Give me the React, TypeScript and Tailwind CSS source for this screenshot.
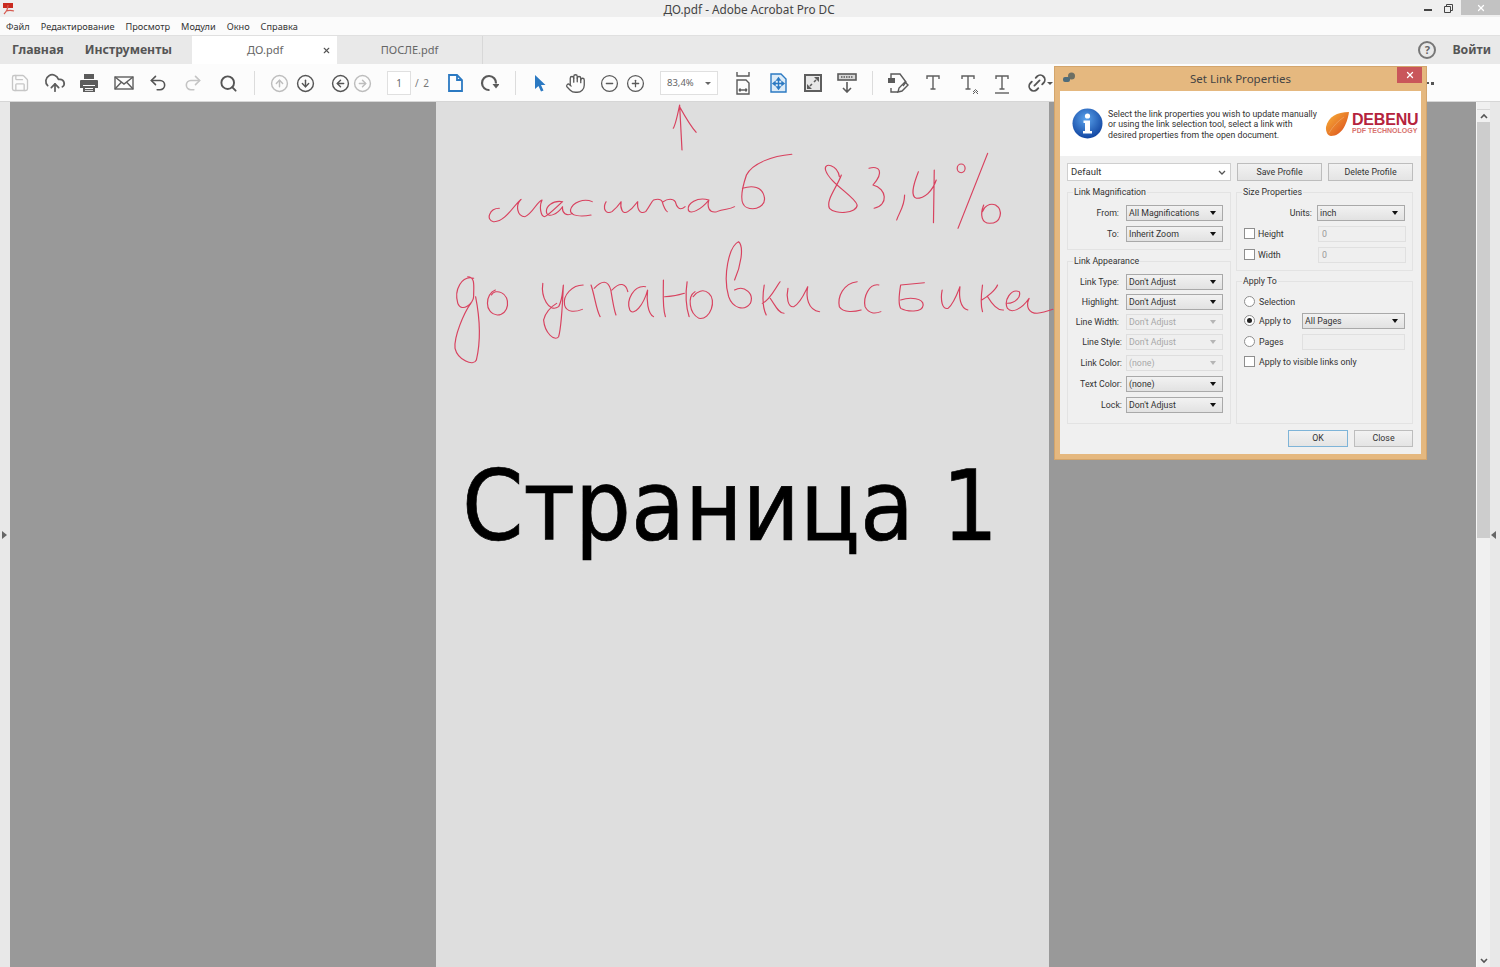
import React from 'react';
import {
  Save, CloudUpload, Undo2, Redo2, Search, CircleArrowUp, CircleArrowDown, CircleArrowLeft, CircleArrowRight,
  Hand, CircleMinus, CirclePlus, Link2, X,
} from 'lucide-react';

const UI = 'font-["Noto_Sans","Liberation_Sans",sans-serif]';
const DLG = 'font-["Roboto","Liberation_Sans",sans-serif]';

// toolbar slot, 24px wide, centres the icon
const Slot = ({ className = '', children }: { className?: string; children: React.ReactNode }) => (
  <div className={`w-6 h-6 flex items-center justify-center shrink-0 ${className}`}>{children}</div>
);

const Sep = ({ className = '' }: { className?: string }) => <div className={`w-px h-6 bg-[#dcdcdc] shrink-0 ${className}`} />;

const SerifT = ({ under, wave }: { under?: boolean; wave?: boolean }) => (
  <svg width="24" height="24" viewBox="0 0 24 24" fill="none" stroke="#5f5f5f" strokeWidth="1.4">
    <path d="M6 8V5h12v3M12 5v13M9.5 18h5" />
    {under && <path d="M5 22h14" />}
    {wave && <path d="M17 21l2.500-2.500L22 21M17 23l2.500-2.500L22 23" strokeWidth="1" />}
  </svg>
);

const Toolbar = () => (
  <div className="h-[38px] flex items-center pl-2 pt-px bg-[#fcfcfc] border-b border-[#d6d6d6] relative">
    <Slot><Save size={20} color="#c6c6c6" strokeWidth={1.6} /></Slot>
    <Slot className="ml-[11px]"><CloudUpload size={22} color="#5e5e5e" strokeWidth={1.9} /></Slot>
    <Slot className="ml-[10px]">
      <svg width="20" height="20" viewBox="0 0 20 20" fill="#5c5c5c">
        <path d="M5 1h10v5H5z" />
        <path fillRule="evenodd" d="M2 7h16a1 1 0 011 1v7h-3v-3H4v3H1V8a1 1 0 011-1z" />
        <path fillRule="evenodd" d="M4 13h12v6H4zM6 15v1h8v-1zM6 17v.8h8V17z" />
      </svg>
    </Slot>
    <Slot className="ml-[11px]">
      <svg width="20" height="16" viewBox="0 0 20 16" fill="none" stroke="#5e5e5e" strokeWidth="1.4">
        <rect x="1" y="2" width="18" height="12" />
        <path d="M1 2l9 7 9-7M1 14l6.500-7M19 14l-6.500-7" />
      </svg>
    </Slot>
    <Slot className="ml-[10px]"><Undo2 size={20} color="#555" strokeWidth={1.9} /></Slot>
    <Slot className="ml-[11px]"><Redo2 size={20} color="#c4c4c4" strokeWidth={1.9} /></Slot>
    <Slot className="ml-[11px]"><Search size={19} color="#555" strokeWidth={2.4} /></Slot>
    <Sep className="ml-[14px]" />
    <Slot className="ml-[12px]"><CircleArrowUp size={19} color="#bdbdbd" strokeWidth={1.8} /></Slot>
    <Slot className="ml-[2px]"><CircleArrowDown size={19} color="#555" strokeWidth={1.8} /></Slot>
    <Slot className="ml-[11px]"><CircleArrowLeft size={19} color="#555" strokeWidth={1.8} /></Slot>
    <Slot className="ml-[-2px]"><CircleArrowRight size={19} color="#bdbdbd" strokeWidth={1.8} /></Slot>
    <div className="ml-[13px] w-[24px] h-[24px] shrink-0 border border-[#e0e0e0] bg-white flex items-center justify-center text-[10px] text-[#666]">1</div>
    <div className="ml-[4px] w-[15px] shrink-0 text-[10px] text-[#777] whitespace-pre tracking-[1px]">/ 2</div>
    <Slot className="ml-[13px]">
      <svg width="16" height="18" viewBox="0 0 16 18" fill="none" stroke="#2b79c2" strokeWidth="1.8">
        <path d="M2 1h8l5 5v11H2zM10 1v5h5" />
      </svg>
    </Slot>
    <Slot className="ml-[10px]">
      <svg width="20" height="20" viewBox="0 0 20 20" fill="none" stroke="#5a5a5a" strokeWidth="2.2">
        <path d="M10.500 17A7 7 0 1117 10.500" />
        <path d="M13.500 11h7L17 15.500z" fill="#5a5a5a" stroke="none" />
      </svg>
    </Slot>
    <Sep className="ml-[14px]" />
    <Slot className="ml-[12px]">
      <svg width="14" height="18" viewBox="0 0 14 18" fill="#2b79c2"><path d="M2 1l10.500 10H8l2.500 5.500-2.500 1L5.500 12 2 15z" /></svg>
    </Slot>
    <Slot className="ml-[11px]"><Hand size={21} color="#5a5a5a" strokeWidth={1.5} /></Slot>
    <Slot className="ml-[10px]"><CircleMinus size={19} color="#5a5a5a" strokeWidth={1.6} /></Slot>
    <Slot className="ml-[2px]"><CirclePlus size={19} color="#5a5a5a" strokeWidth={1.6} /></Slot>
    <div className="ml-[13px] w-[58px] h-[24px] shrink-0 border border-[#e0e0e0] bg-white flex items-center pl-[6px] text-[9.500px] text-[#666]">
      83,4%
      <span className="ml-auto mr-[6px] w-0 h-0 border-x-[3px] border-x-transparent border-t-[3px] border-t-[#666]" />
    </div>
    <Slot className="ml-[13px]">
      <svg width="18" height="24" viewBox="0 0 18 24" fill="none" stroke="#5a5a5a" strokeWidth="1.4">
        <path d="M3 1v4h12V1M3 9h9l3 3v11H3zM5 19h8M5 19l1.500-1.500M5 19l1.500 1.500M13 19l-1.500-1.500M13 19l-1.500 1.500" />
      </svg>
    </Slot>
    <Slot className="ml-[11px]">
      <svg width="17" height="20" viewBox="0 0 17 20" fill="none" stroke="#2b79c2" strokeWidth="1.4">
        <path d="M1 1h10l5 5v13H1z" fill="#dcebf7" />
        <path d="M8.500 6v9M4 10.500h9M8.500 5L7 7h3zM8.500 16L7 14h3zM3 10.500L5 9v3zM14 10.500L12 9v3z" />
      </svg>
    </Slot>
    <Slot className="ml-[11px]">
      <svg width="18" height="18" viewBox="0 0 18 18">
        <rect width="18" height="18" fill="#5e5e5e" />
        <rect x="2" y="2" width="14" height="14" fill="#e8e8e8" />
        <path d="M10 3h5v5zM3 10v5h5z" fill="#5e5e5e" />
        <path d="M12 6l-2 2M6 12l2-2" stroke="#5e5e5e" strokeWidth="1.6" />
      </svg>
    </Slot>
    <Slot className="ml-[10px]">
      <svg width="20" height="20" viewBox="0 0 20 20" fill="none" stroke="#5a5a5a" strokeWidth="1.6">
        <rect x="1" y="1" width="18" height="6" fill="#d8d8d8" />
        <path d="M4 4h12" strokeDasharray="1.5 1" />
        <path d="M10 9v10M6 15l4 4 4-4" />
      </svg>
    </Slot>
    <Sep className="ml-[13px]" />
    <Slot className="ml-[13px]">
      <svg width="22" height="22" viewBox="0 0 22 22" fill="none" stroke="#5a5a5a" strokeWidth="1.4">
        <path d="M4 8V2h9l6 8-3 4M4 16v4h7" />
        <rect x="1" y="6" width="7" height="5" fill="#5a5a5a" stroke="none" />
        <path d="M11 20l1-4 6-6 3 3-6 6z" />
      </svg>
    </Slot>
    <Slot className="ml-[11px]"><SerifT /></Slot>
    <Slot className="ml-[11px]"><SerifT wave /></Slot>
    <Slot className="ml-[10px]"><SerifT under /></Slot>
    <Slot className="ml-[11px]"><Link2 size={22} color="#555" strokeWidth={2} className="-rotate-45" /></Slot>
    <span className="w-0 h-0 border-x-[3px] border-x-transparent border-t-[3px] border-t-[#555] -ml-[2px]" />
    <span className="ml-auto mr-[66px] flex gap-[2px]">
      <span className="w-[2px] h-[2px] bg-[#555]" />
      <span className="w-[3px] h-[3px] bg-[#555]" />
    </span>
  </div>
);

const Scribble = () => (
  <svg
    className="absolute left-[4px] top-[-2px] overflow-visible pointer-events-none"
    width="620"
    height="280"
    viewBox="0 0 1568 840"
    preserveAspectRatio="none"
    fill="none"
    stroke="#d8425f"
    strokeWidth="3"
    strokeLinecap="round"
    strokeLinejoin="round"
  >
    <path d="M612 150L606 15M606 15C600 50 595 75 590 85M606 20C620 50 635 80 648 97" />
    <path d="M150 325C125 325 115 360 135 365C165 368 190 310 205 298C190 315 195 350 215 350C235 340 245 305 258 300C250 320 255 350 265 350C275 345 300 315 310 305C285 300 265 320 270 340C275 352 295 345 310 320C308 340 320 350 335 340" />
    <path d="M385 305C365 295 335 305 330 330C328 350 360 350 382 345" />
    <path d="M420 305C410 325 420 345 435 335C445 325 455 310 458 305C455 325 462 345 475 335C490 325 495 310 500 305C498 325 505 345 520 335C530 320 535 305 540 300C555 295 560 300 562 305C565 320 572 335 575 335M565 305C575 295 590 295 595 305C598 320 605 335 620 320" />
    <path d="M680 300C650 290 625 310 628 330C632 345 660 330 680 300C675 320 680 340 700 335C720 325 730 330 745 320" />
    <path d="M890 163C840 168 790 190 775 225C765 260 755 310 775 322C800 335 825 315 820 290C815 260 790 255 765 265" />
    <path d="M1010 230C1005 195 970 185 975 210C985 250 1050 290 1055 315C1055 340 1000 345 985 325C975 300 1005 260 1015 225" />
    <path d="M1085 205C1110 195 1125 215 1095 255C1130 265 1135 315 1098 325" />
    <path d="M1175 285C1175 320 1160 340 1155 360" />
    <path d="M1210 215C1195 260 1190 290 1205 295C1225 295 1245 275 1255 240M1250 210L1248 368" />
    <path d="M1385 160L1310 385" />
    <ellipse cx="1318" cy="205" rx="10" ry="13" />
    <path d="M1375 315C1365 345 1370 370 1390 370C1420 370 1425 330 1405 315C1390 308 1375 320 1372 335" />

    <path d="M85 535C55 525 35 570 45 610C55 640 85 610 85 590C85 560 90 530 70 530" />
    <path d="M78 610C60 640 35 710 38 745C45 780 85 800 92 780C100 740 105 680 90 590" />
    <path d="M140 570C115 580 110 640 145 645C175 645 180 590 155 578C145 572 135 575 130 585" />
    <path d="M260 550C255 590 275 640 300 620C310 600 310 570 312 555C310 610 305 690 300 710C290 725 265 700 262 660C265 640 280 620 295 610" />
    <path d="M362 555C335 555 310 585 315 615C320 640 345 635 360 628" />
    <path d="M382 555C392 590 395 630 405 650M390 565C410 540 425 540 432 570C436 600 440 630 445 645M435 570C455 545 470 550 475 575" />
    <path d="M520 560C490 555 470 600 480 630C490 650 515 615 525 570C522 600 525 640 540 650" />
    <path d="M565 540C565 580 562 620 570 650M568 590C590 590 605 585 618 580M625 545C620 585 622 620 630 650" />
    <path d="M645 575C625 590 630 640 655 655C685 660 700 600 680 580C665 565 650 575 640 590" />
    <path d="M755 425C730 440 715 530 730 590C740 625 770 635 785 610C795 580 770 555 745 570M755 425C770 440 760 500 745 540" />
    <path d="M820 555C815 590 815 620 825 645M815 610C835 600 850 560 860 545M835 595C845 610 855 640 870 640" />
    <path d="M880 565C875 590 880 625 895 620C915 605 925 570 930 560C925 590 930 630 960 635" />
    <path d="M1055 545C1020 550 1005 590 1010 620C1020 640 1050 635 1065 630" />
    <path d="M1110 555C1085 550 1070 590 1075 620C1085 645 1105 640 1115 635" />
    <path d="M1165 555C1160 590 1160 615 1165 625C1180 635 1220 640 1222 615C1222 595 1190 590 1165 600M1165 555L1225 548" />
    <path d="M1270 570C1265 600 1270 630 1285 625C1300 610 1310 575 1315 560C1312 590 1315 625 1335 630" />
    <path d="M1372 555C1368 590 1368 620 1372 635M1370 600C1385 590 1405 570 1410 555M1385 590C1395 610 1410 632 1425 630" />
    <path d="M1435 610C1455 610 1470 590 1465 575C1445 565 1425 600 1435 625C1445 640 1470 630 1490 595C1480 620 1490 640 1510 640C1525 638 1540 632 1550 628" />
  </svg>
);

const Combo = ({ value, disabled, className = '' }: { value: string; disabled?: boolean; className?: string }) => (
  <div
    className={`h-4 flex items-center pl-[2px] pr-[6px] border text-[8.800px] ${
      disabled
        ? 'border-[#dedede] bg-[#efefef] text-[#a8a8a8]'
        : 'border-[#a9a9a9] bg-gradient-to-b from-[#f2f2f2] to-[#e2e2e2] text-[#333]'
    } ${className}`}
  >
    <span className="pt-px">{value}</span>
    <span className={`ml-auto w-0 h-0 border-x-[3.5px] border-x-transparent border-t-[4px] ${disabled ? 'border-t-[#b5b5b5]' : 'border-t-[#111]'}`} />
  </div>
);

const LabeledCombo = ({ label, value, disabled, far, className = '' }: { label: string; value: string; disabled?: boolean; far?: boolean; className?: string }) => (
  <div className={`flex items-center ${className}`}>
    <div className={`text-right pt-px text-[8.800px] text-[#333] whitespace-nowrap ${far ? 'w-[54px] mr-[4px]' : 'w-[51px] mr-[7px]'}`}>{label}</div>
    <Combo value={value} disabled={disabled} className="w-[97px]" />
  </div>
);

const Group = ({ title, className = '', children }: { title: string; className?: string; children: React.ReactNode }) => (
  <fieldset className={`border border-[#e3e3e3] min-w-0 ${className}`}>
    <legend className="ml-[5px] px-[1px] h-3 leading-3 text-[8.800px] text-[#333]">{title}</legend>
    {children}
  </fieldset>
);

const Check = () => <div className="w-[11px] h-[11px] -mt-px border border-[#8e8e8e] bg-white shrink-0" />;

const Radio = ({ on }: { on?: boolean }) => (
  <div className="w-[11px] h-[11px] -mt-px rounded-full border border-[#8e8e8e] bg-white shrink-0 flex items-center justify-center">
    {on && <div className="w-[5px] h-[5px] rounded-full bg-[#222]" />}
  </div>
);

const DisabledInput = ({ value = '', className = '' }: { value?: string; className?: string }) => (
  <div className={`h-4 border border-[#e0e0e0] bg-[#efefef] flex items-center pl-[3px] pt-px text-[8.800px] text-[#999] ${className}`}>{value}</div>
);

const PushButton = ({ label, className = '' }: { label: string; className?: string }) => (
  <div className={`flex items-center justify-center pt-px border bg-gradient-to-b from-[#f2f2f2] to-[#e4e4e4] text-[8.800px] text-[#333] ${className}`}>{label}</div>
);

const Dialog = () => (
  <div className={`absolute left-[1054px] top-[66px] w-[373px] h-[394px] bg-[#e5b87f] border border-[#d3a56c] flex flex-col ${DLG}`}>
    <div className={`h-6 relative flex items-center justify-center text-[11.500px] text-[#444] shrink-0 ${UI}`}>
      Set Link Properties
      <svg className="absolute left-[7px] top-[5px]" width="14" height="12" viewBox="0 0 14 12">
        <circle cx="9.5" cy="4" r="3.5" fill="#6d6f63" />
        <rect x="1" y="5" width="7" height="5" rx="2" fill="#4f6c7a" />
      </svg>
      <div className="absolute right-[4px] top-0 w-[25px] h-4 bg-[#c9565a] flex items-center justify-center">
        <X size={10} color="#fff" strokeWidth={3} />
      </div>
    </div>
    <div className="mx-[5px] mb-[5px] flex-1 flex flex-col bg-[#f0f0f0]">
      <div className="h-[65px] bg-white flex items-center shrink-0">
        <svg className="ml-[12px] shrink-0" width="31" height="31" viewBox="0 0 31 31">
          <defs>
            <radialGradient id="infoBlue" cx="45%" cy="35%" r="70%">
              <stop offset="0%" stopColor="#5ba3ec" />
              <stop offset="100%" stopColor="#0c3f9c" />
            </radialGradient>
          </defs>
          <circle cx="15.5" cy="15.5" r="15" fill="url(#infoBlue)" />
          <circle cx="15.5" cy="8" r="2.6" fill="#fff" />
          <path d="M11.500 12.500h6.500v10.500h2v2.500h-9V23h2v-8h-1.500z" fill="#fff" />
        </svg>
        <div className="ml-[5px] pt-[2px] w-[215px] text-[8.750px] leading-[10.500px] text-[#333] whitespace-nowrap">
          Select the link properties you wish to update manually<br />
          or using the link selection tool, select a link with<br />
          desired properties from the open document.
        </div>
        <svg className="ml-[2px] shrink-0" width="25" height="26" viewBox="0 0 25 26">
          <defs>
            <linearGradient id="leafOrange" x1="0" y1="0" x2="1" y2="1">
              <stop offset="0%" stopColor="#f9b53a" />
              <stop offset="100%" stopColor="#d9461a" />
            </linearGradient>
          </defs>
          <path d="M24 1C12 1 3 6 1 16c-.5 5 2 9 5 9C16 25 22 14 24 1z" fill="url(#leafOrange)" />
          <path d="M4 22C8 15 13 10 19 6" stroke="#fff3" strokeWidth="1" fill="none" />
        </svg>
        <div className="ml-[2px] flex flex-col font-['Liberation_Sans',sans-serif]">
          <span className="text-[16px] leading-[14px] font-bold text-[#b5233d] tracking-[-0.2px]">DEBENU</span>
          <span className="text-[7px] leading-[8px] text-[#d8736f] font-bold whitespace-nowrap">PDF TECHNOLOGY</span>
        </div>
      </div>
      <div className="flex-1 pl-[7px] pt-[7px]">
        <div className="flex h-[18px]">
          <div className="w-[164px] border border-[#cfcfcf] bg-white flex items-center pl-[3px] pr-[4px] pt-px text-[9.500px] text-[#333]">
            Default
            <svg className="ml-auto" width="8" height="6" viewBox="0 0 8 6" fill="none" stroke="#555" strokeWidth="1.3"><path d="M1 1l3 3 3-3" /></svg>
          </div>
          <PushButton label="Save Profile" className="ml-[6px] w-[85px] border-[#bdbdbd]" />
          <PushButton label="Delete Profile" className="ml-[6px] w-[85px] border-[#bdbdbd]" />
        </div>
        <div className="flex mt-[5px]">
          <div className="w-[164px] flex flex-col shrink-0">
            <Group title="Link Magnification" className="h-[64px]">
              <LabeledCombo label="From:" value="All Magnifications" className="mt-[7px]" />
              <LabeledCombo label="To:" value="Inherit Zoom" className="mt-[5px]" />
            </Group>
            <Group title="Link Appearance" className="h-[169px] mt-[5px]">
              <LabeledCombo label="Link Type:" value="Don't Adjust" className="mt-[7px]" />
              <LabeledCombo label="Highlight:" value="Don't Adjust" className="mt-[4px]" />
              <LabeledCombo label="Line Width:" value="Don't Adjust" disabled className="mt-[4px]" />
              <LabeledCombo label="Line Style:" value="Don't Adjust" disabled far className="mt-[4px]" />
              <LabeledCombo label="Link Color:" value="(none)" disabled far className="mt-[5px]" />
              <LabeledCombo label="Text Color:" value="(none)" far className="mt-[5px]" />
              <LabeledCombo label="Lock:" value="Don't Adjust" far className="mt-[5px]" />
            </Group>
          </div>
          <div className="w-[177px] ml-[5px] flex flex-col shrink-0">
            <Group title="Size Properties" className="h-[85px]">
              <div className="flex items-center mt-[7px] text-[8.800px] text-[#333]">
                <span className="w-[75px] pt-px text-right">Units:</span>
                <Combo value="inch" className="w-[88px] ml-[5px]" />
              </div>
              <div className="flex items-center mt-[5px] pl-[7px] text-[8.800px] text-[#333]">
                <Check /><span className="ml-[3px] pt-px w-[60px]">Height</span>
                <DisabledInput value="0" className="w-[88px]" />
              </div>
              <div className="flex items-center mt-[5px] pl-[7px] text-[8.800px] text-[#333]">
                <Check /><span className="ml-[3px] pt-px w-[60px]">Width</span>
                <DisabledInput value="0" className="w-[88px]" />
              </div>
            </Group>
            <Group title="Apply To" className="h-[149px] mt-[4px]">
              <div className="flex items-center h-4 mt-[7px] pl-[7px] text-[8.800px] text-[#333]">
                <Radio /><span className="ml-[4px] pt-px">Selection</span>
              </div>
              <div className="flex items-center h-4 mt-[3px] pl-[7px] text-[8.800px] text-[#333]">
                <Radio on /><span className="ml-[4px] pt-px w-[43px]">Apply to</span>
                <Combo value="All Pages" className="w-[103px]" />
              </div>
              <div className="flex items-center h-4 mt-[5px] pl-[7px] text-[8.800px] text-[#333]">
                <Radio /><span className="ml-[4px] pt-px w-[43px]">Pages</span>
                <DisabledInput className="w-[103px]" />
              </div>
              <div className="flex items-center h-4 mt-[4px] pl-[7px] text-[8.800px] text-[#333]">
                <Check /><span className="ml-[4px] pt-px">Apply to visible links only</span>
              </div>
            </Group>
          </div>
        </div>
        <div className="flex justify-end mt-[6px] pr-[8px]">
          <PushButton label="OK" className="w-[60px] h-[17px] border-[#7eb4d8]" />
          <PushButton label="Close" className="w-[59px] h-[17px] ml-[6px] border-[#bdbdbd]" />
        </div>
      </div>
    </div>
  </div>
);

export default function App() {
  return (
    <div className={`relative w-[1500px] h-[967px] overflow-hidden flex flex-col bg-[#e8e8e8] ${UI}`}>
      {/* title bar */}
      <div className="h-[17px] shrink-0 bg-[#efefef] flex items-center relative">
        <svg className="ml-[2px]" width="13" height="13" viewBox="0 0 13 13">
          <rect x="1" y="1" width="10" height="5" fill="#c92a1f" />
          <path d="M2 12C5 9 6 6 6 3M4 9c3-1 5-1 8 0" stroke="#d65a50" strokeWidth="1.200" fill="none" />
        </svg>
        <div className="absolute inset-x-0 top-px text-center text-[11.750px] leading-[17px] text-[#444] pr-[2px]">ДО.pdf - Adobe Acrobat Pro DC</div>
        <div className="ml-auto flex items-center h-full relative">
          <div className="w-2 h-[2px] bg-[#444] mt-[2px]" />
          <svg className="ml-[12px]" width="9" height="9" viewBox="0 0 9 9" fill="none" stroke="#444"><path d="M.5 2.500h6v6h-6zM2.500 2.500v-2h6v6h-2" /></svg>
          <div className="ml-[8px] w-[39px] h-[15px] self-start bg-[#c2c2c2] flex items-center justify-center">
            <X size={10} color="#fff" strokeWidth={3} />
          </div>
        </div>
      </div>
      {/* menu */}
      <div className="h-[18px] shrink-0 bg-[#fbfbfb] flex items-center pl-[6px] pt-px gap-[11px] text-[9.200px] text-[#333]">
        <span>Файл</span><span>Редактирование</span><span>Просмотр</span><span>Модули</span><span>Окно</span><span>Справка</span>
      </div>
      {/* tabs */}
      <div className="h-[29px] shrink-0 flex items-stretch bg-[#e9e9e9] border-t border-[#e0e0e0]">
        <div className="w-[192px] flex items-center pl-3 gap-[21px] text-[12.300px] font-bold text-[#555]">
          <span>Главная</span><span>Инструменты</span>
        </div>
        <div className="w-[145px] bg-white flex items-center text-[11px] text-[#666] relative">
          <span className="ml-[55px]">ДО.pdf</span>
          <X size={9} color="#555" strokeWidth={3} className="ml-auto mr-[6px]" />
        </div>
        <div className="w-[146px] flex items-center justify-center text-[11px] text-[#666] border-r border-[#d8d8d8]">ПОСЛЕ.pdf</div>
        <div className="ml-auto flex items-center pr-[9px]">
          <div className="w-[18px] h-[18px] rounded-full border-2 border-[#777] flex items-center justify-center text-[11px] font-bold text-[#666]">?</div>
          <span className="ml-[16px] text-[12.300px] font-bold text-[#555]">Войти</span>
        </div>
      </div>
      <Toolbar />
      {/* work area */}
      <div className="flex-1 flex min-h-0">
        <div className="w-[10px] shrink-0 bg-[#e8e8e8] flex items-center">
          <span className="w-0 h-0 ml-[2px] border-y-[4px] border-y-transparent border-l-[5px] border-l-[#666]" />
        </div>
        <div className="flex-1 bg-[#999999] flex justify-center pr-[1px]">
          <div className="w-[613px] bg-[#dedede] relative">
            <Scribble />
            <div className="mt-[344px] pl-[26px] text-[98px] leading-[120px] text-black whitespace-pre font-['DejaVu_Sans_Condensed','DejaVu_Sans',sans-serif] font-stretch-condensed [-webkit-text-stroke:0.7px_black]">Страница 1</div>
          </div>
        </div>
        <div className="w-[14px] shrink-0 flex flex-col bg-[#f0f0f0] border-l border-[#f6f6f6]">
          <div className="h-2 border-b border-[#d6d6d6]" />
          <div className="h-3 flex items-center justify-center">
            <svg width="8" height="6" viewBox="0 0 8 6" fill="none" stroke="#555" strokeWidth="1.600"><path d="M1 5l3-3 3 3" /></svg>
          </div>
          <div className="h-[416px] bg-[#cdcdcd]" />
          <div className="mt-auto h-3 flex items-center justify-center">
            <svg width="8" height="6" viewBox="0 0 8 6" fill="none" stroke="#555" strokeWidth="1.600"><path d="M1 1l3 3 3-3" /></svg>
          </div>
        </div>
        <div className="w-[10px] shrink-0 bg-[#e8e8e8] flex items-center">
          <span className="w-0 h-0 ml-[1px] border-y-[4px] border-y-transparent border-r-[5px] border-r-[#666]" />
        </div>
      </div>
      <Dialog />
    </div>
  );
}
